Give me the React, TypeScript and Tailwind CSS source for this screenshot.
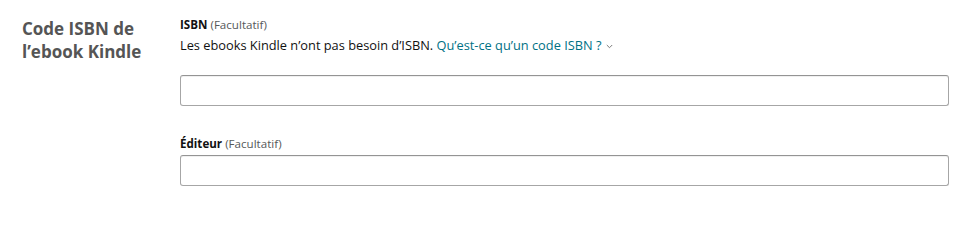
export default function App() {
  return (
    <div className="flex h-[233px] w-[970px] bg-white font-['Open_Sans',sans-serif]">
      <div className="w-[180px] shrink-0 pl-[22px] pt-[17px]">
        <h2 className="text-[17px] font-bold leading-[23px] text-[#555]">
          Code ISBN de
          <br />
          l’ebook Kindle
        </h2>
      </div>
      <div className="w-[769px] pt-[16px]">
        <div className="text-[11.6px] leading-[18px] text-[#111]">
          <span className="font-bold">ISBN</span>{" "}
          <span className="text-[#565959]">(Facultatif)</span>
        </div>
        <div className="mt-[1px] flex items-center text-[12.8px] leading-[20px] text-[#111]">
          <span>Les ebooks Kindle n’ont pas besoin d’ISBN.&nbsp;</span>
          <span className="text-[#007185]">Qu’est-ce qu’un code ISBN ?</span>
          <svg className="ml-[5px] mt-[2px]" width="7" height="5" viewBox="0 0 7 5" fill="none">
            <path d="M0.8 1 L3.5 3.7 L6.2 1" stroke="#6b6b6b" strokeWidth="0.9" />
          </svg>
        </div>
        <input
          type="text"
          className="mt-[20px] block h-[31px] w-full rounded-[3px] border border-[#a6a6a6] border-t-[#949494] bg-white px-2 text-[13px] shadow-[inset_0_1px_0_rgba(0,0,0,0.06)] outline-none"
        />
        <div className="mt-[29px] text-[11.6px] leading-[18px] text-[#111]">
          <span className="font-bold">Éditeur</span>{" "}
          <span className="text-[#565959]">(Facultatif)</span>
        </div>
        <input
          type="text"
          className="mt-[2px] block h-[31px] w-full rounded-[3px] border border-[#a6a6a6] border-t-[#949494] bg-white px-2 text-[13px] shadow-[inset_0_1px_0_rgba(0,0,0,0.06)] outline-none"
        />
      </div>
    </div>
  );
}
